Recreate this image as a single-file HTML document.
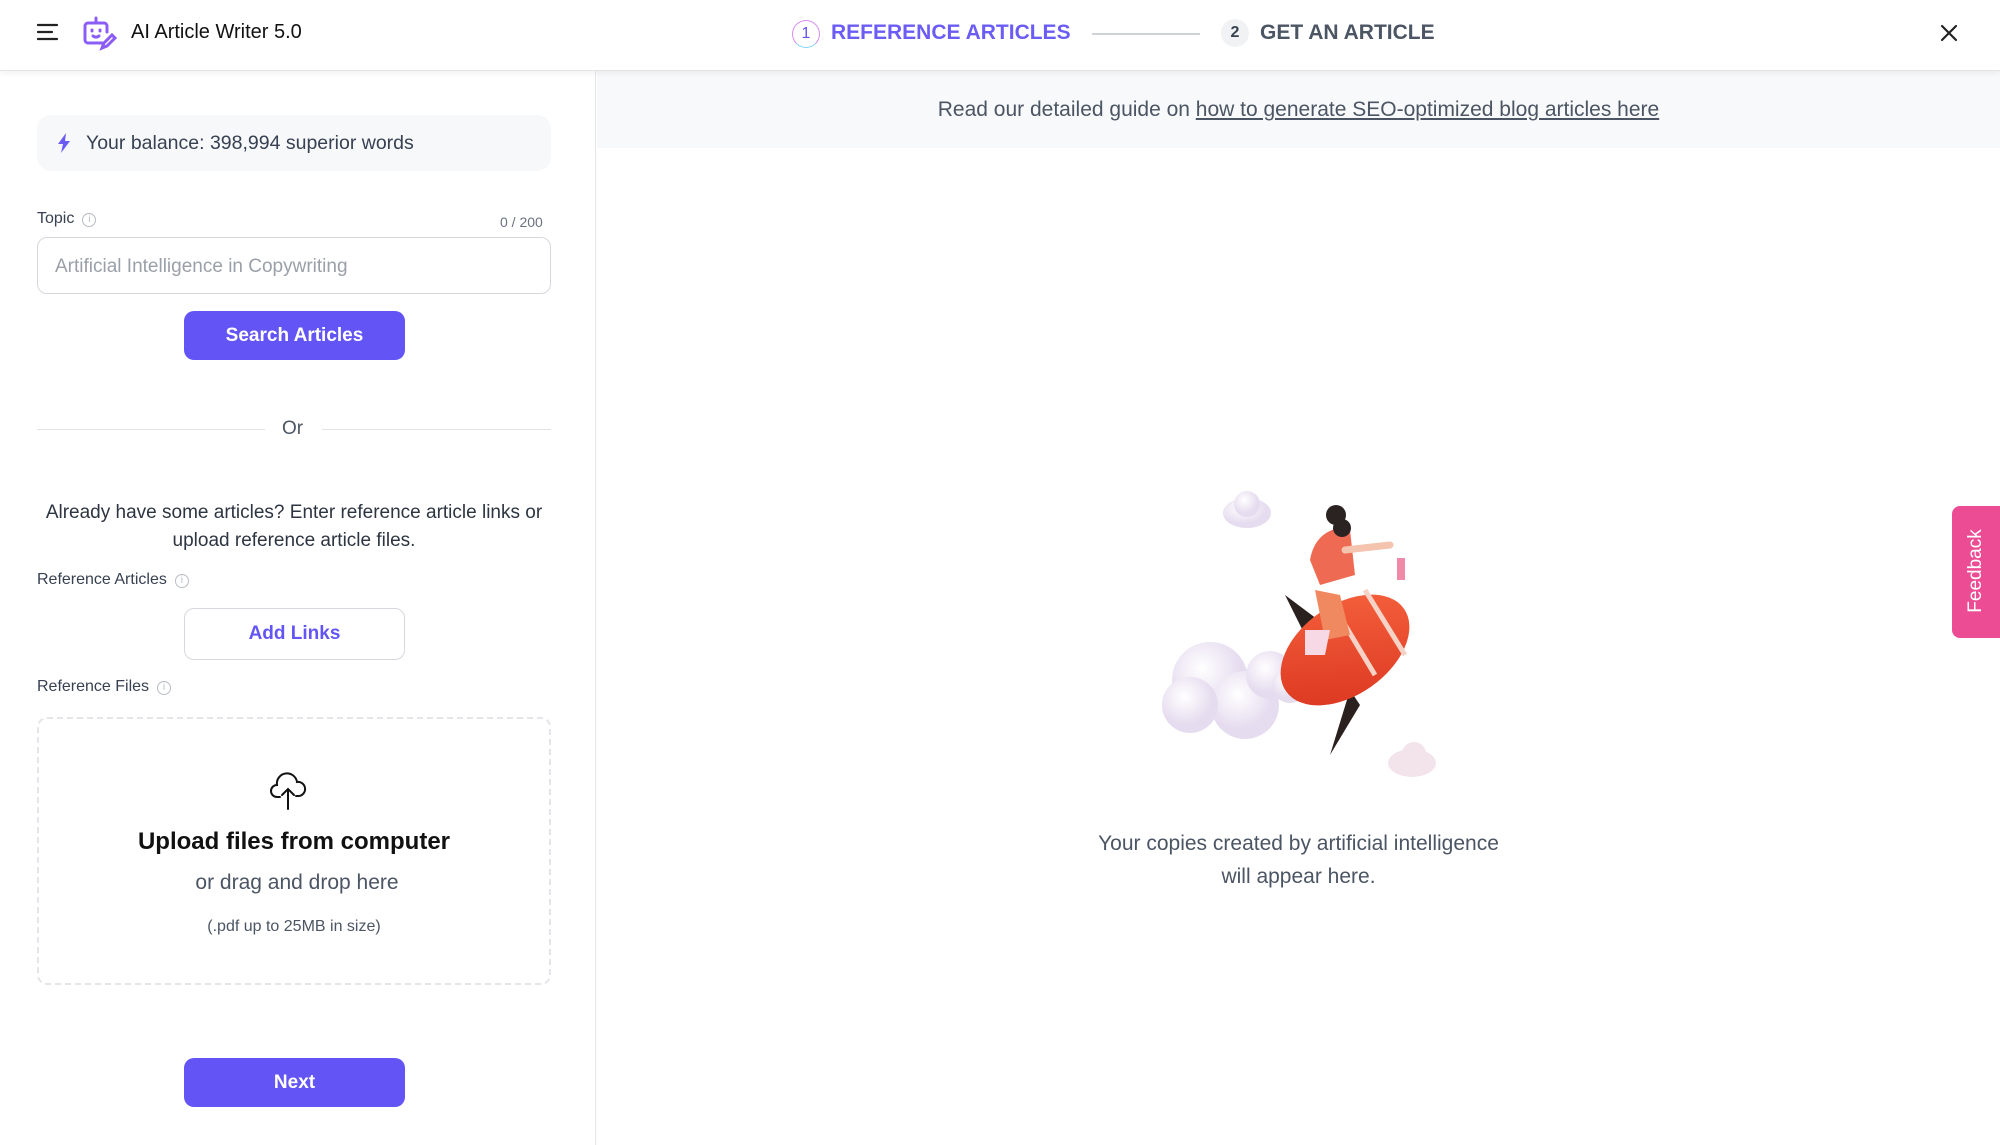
<!DOCTYPE html>
<html><head><meta charset="utf-8"><style>
*{box-sizing:border-box;margin:0;padding:0}
body{width:2000px;height:1145px;overflow:hidden;background:#fff;font-family:"Liberation Sans",sans-serif;color:#1f2937;position:relative}
.hdr{position:absolute;left:0;top:0;width:2000px;height:71px;background:#fff;border-bottom:1px solid #e2e4e8;box-shadow:0 2px 6px rgba(0,0,0,.06);z-index:2}
.abs{position:absolute}
.left{position:absolute;left:0;top:71px;width:596px;height:1074px;border-right:1px solid #e5e7eb}
.lbl{position:absolute;left:37px;font-size:16px;color:#374151}
.info{display:inline-block;width:14px;height:14px;border:1px solid #b8bcc4;border-radius:50%;font-size:10px;color:#b8bcc4;text-align:center;line-height:12px;margin-left:8px;vertical-align:1px}
.btn{position:absolute;left:184px;width:221px;height:49px;border-radius:10px;background:#6355f5;color:#fff;font-weight:bold;font-size:19px;text-align:center;line-height:49px}
</style></head><body>
<div class="hdr">
 <svg class="abs" style="left:37px;top:23px" width="22" height="18" viewBox="0 0 22 18"><path d="M1 2H20M1 9H15M1 16H20" stroke="#222" stroke-width="2.2" stroke-linecap="round"/></svg>
 <svg class="abs" style="left:82px;top:15px" width="36" height="36" viewBox="0 0 36 36" fill="none" stroke="#8b5cf6" stroke-width="3" stroke-linecap="round"><path d="M14 3v5"/><path d="M20 28H6a3 3 0 0 1-3-3V11a3 3 0 0 1 3-3h16a3 3 0 0 1 3 3v6"/><path d="M10 15v1M18 15v1M11 21c2 1.5 4 1.5 6 0"/><path d="M20 33l2-5 8-8 3 3-8 8z"/></svg>
 <div class="abs" style="left:131px;top:21px;font-size:20px;color:#111">AI Article Writer 5.0</div>
 <div class="abs" style="left:792px;top:20px;width:28px;height:28px;border-radius:50%;border:1.5px solid #d78cf0;border-bottom-color:#7fd3f5;font-size:16px;color:#6355f5;text-align:center;line-height:25px">1</div>
 <div class="abs" style="left:831px;top:21px;font-size:21px;font-weight:bold;color:#6b5cf6">REFERENCE ARTICLES</div>
 <div class="abs" style="left:1092px;top:33px;width:108px;height:1.5px;background:#cfd3d9"></div>
 <div class="abs" style="left:1221px;top:19px;width:28px;height:28px;border-radius:50%;background:#f1f2f4;font-size:16px;font-weight:bold;color:#374151;text-align:center;line-height:28px">2</div>
 <div class="abs" style="left:1260px;top:21px;font-size:21px;font-weight:bold;color:#4b5563">GET AN ARTICLE</div>
 <svg class="abs" style="left:1940px;top:24px" width="18" height="18" viewBox="0 0 18 18"><path d="M2 2L16 16M16 2L2 16" stroke="#222" stroke-width="2.2" stroke-linecap="round"/></svg>
</div>
<div class="left">
 <div class="abs" style="left:37px;top:44px;width:514px;height:56px;border-radius:14px;background:#f7f8fa"></div>
 <svg class="abs" style="left:57px;top:62px" width="14" height="20" viewBox="0 0 14 20"><path d="M9 0L1 11h5l-2 9 9-12H8z" fill="#6b5cf6"/></svg>
 <div class="abs" style="left:86px;top:61px;font-size:19.5px;color:#374151">Your balance: 398,994 superior words</div>
 <div class="lbl" style="top:139px">Topic<span class="info">i</span></div>
 <div class="abs" style="left:500px;top:143px;font-size:14px;color:#6b7280">0 / 200</div>
 <div class="abs" style="left:37px;top:166px;width:514px;height:57px;border:1px solid #d5d8dd;border-radius:10px;font-size:19px;color:#9aa0a8;padding:18px 0 0 17px">Artificial Intelligence in Copywriting</div>
 <div class="btn" style="top:240px">Search Articles</div>
 <div class="abs" style="left:37px;top:358px;width:228px;height:1px;background:#dfe2e6"></div>
 <div class="abs" style="left:322px;top:358px;width:229px;height:1px;background:#dfe2e6"></div>
 <div class="abs" style="left:282px;top:347px;font-size:19px;color:#4b5563">Or</div>
 <div class="abs" style="left:30px;top:428px;width:528px;text-align:center;font-size:19px;line-height:28px;color:#2d3540">Already have some articles? Enter reference article links or upload reference article files.</div>
 <div class="lbl" style="top:500px">Reference Articles<span class="info">i</span></div>
 <div class="abs" style="left:184px;top:537px;width:221px;height:52px;border:1px solid #d5d8dd;border-radius:10px;color:#6355f5;font-weight:bold;font-size:19px;text-align:center;line-height:50px">Add Links</div>
 <div class="lbl" style="top:607px">Reference Files<span class="info">i</span></div>
 <div class="abs" style="left:37px;top:646px;width:514px;height:268px;border:2.5px dashed #e3e5e9;border-radius:10px"></div>
 <svg class="abs" style="left:269px;top:699px" width="38" height="40" viewBox="0 0 38 40" fill="none" stroke="#111" stroke-width="2" stroke-linecap="round"><path d="M11 27H8a6 6 0 0 1 0-12 10 10 0 0 1 20-3 7 7 0 0 1 2 14h-3"/><path d="M19 39V19M13 25l6-6 6 6"/></svg>
 <div class="abs" style="left:37px;top:757px;width:514px;text-align:center;font-size:24px;font-weight:bold;color:#111">Upload files from computer</div>
 <div class="abs" style="left:37px;top:800px;width:520px;text-align:center;font-size:21px;color:#4b5563">or drag and drop here</div>
 <div class="abs" style="left:37px;top:847px;width:514px;text-align:center;font-size:16px;color:#4b5563">(.pdf up to 25MB in size)</div>
 <div class="btn" style="top:987px">Next</div>
</div>
<div class="abs" style="left:597px;top:71px;width:1403px;height:77px;background:#f8f9fa"></div>
<div class="abs" style="left:597px;top:98px;width:1403px;text-align:center;font-size:21px;color:#4b5563">Read our detailed guide on <span style="text-decoration:underline">how to generate SEO-optimized blog articles here</span></div>
<svg class="abs" style="left:1150px;top:480px" width="320" height="300" viewBox="0 0 320 300">
 <defs><radialGradient id="c" cx=".4" cy=".35"><stop offset="0" stop-color="#fff"/><stop offset="1" stop-color="#e6dcef"/></radialGradient>
 <linearGradient id="r" x1="0" y1="1" x2="1" y2="0"><stop offset="0" stop-color="#d9331e"/><stop offset="1" stop-color="#f7653f"/></linearGradient></defs>
 <ellipse cx="97" cy="33" rx="24" ry="15" fill="url(#c)"/><circle cx="97" cy="24" r="13" fill="url(#c)"/>
 <ellipse cx="262" cy="283" rx="24" ry="14" fill="#f3e4ec"/><circle cx="264" cy="274" r="12" fill="#f3e4ec"/>
 <circle cx="60" cy="200" r="38" fill="url(#c)"/><circle cx="95" cy="225" r="34" fill="url(#c)"/><circle cx="40" cy="225" r="28" fill="url(#c)"/><circle cx="120" cy="195" r="24" fill="url(#c)"/><circle cx="140" cy="205" r="18" fill="url(#c)"/>
 <path d="M135 115l40 30-20 10z" fill="#2a211f"/><path d="M200 210l-20 65 30-50z" fill="#2a211f"/>
 <ellipse cx="195" cy="170" rx="72" ry="45" transform="rotate(-35 195 170)" fill="url(#r)"/>
 <path d="M180 120l45 75M215 110l40 65" stroke="#f7d2c7" stroke-width="5"/>
 <path d="M160 80c5-30 30-35 40-30l5 45-35 10z" fill="#ef6a52"/>
 <path d="M165 110l25 5 10 40-25 5z" fill="#f0895f"/><path d="M155 150l25 0-5 25-20 0z" fill="#f6d9e5"/>
 <circle cx="186" cy="35" r="10" fill="#2a2322"/><circle cx="192" cy="48" r="9" fill="#2a2322"/>
 <path d="M195 70l45-5" stroke="#f4c4ae" stroke-width="7" stroke-linecap="round"/>
 <rect x="247" y="78" width="8" height="22" fill="#f08aa8"/>
</svg>
<div class="abs" style="left:597px;top:827px;width:1403px;text-align:center;font-size:21px;line-height:33px;color:#4b5563">Your copies created by artificial intelligence<br>will appear here.</div>
<div class="abs" style="left:1952px;top:506px;width:48px;height:132px;background:#ec4c93;border-radius:8px 0 0 8px"></div>
<div class="abs" style="left:1928px;top:560px;width:96px;text-align:center;transform:rotate(-90deg);color:#fff;font-size:19px">Feedback</div>
</body></html>
